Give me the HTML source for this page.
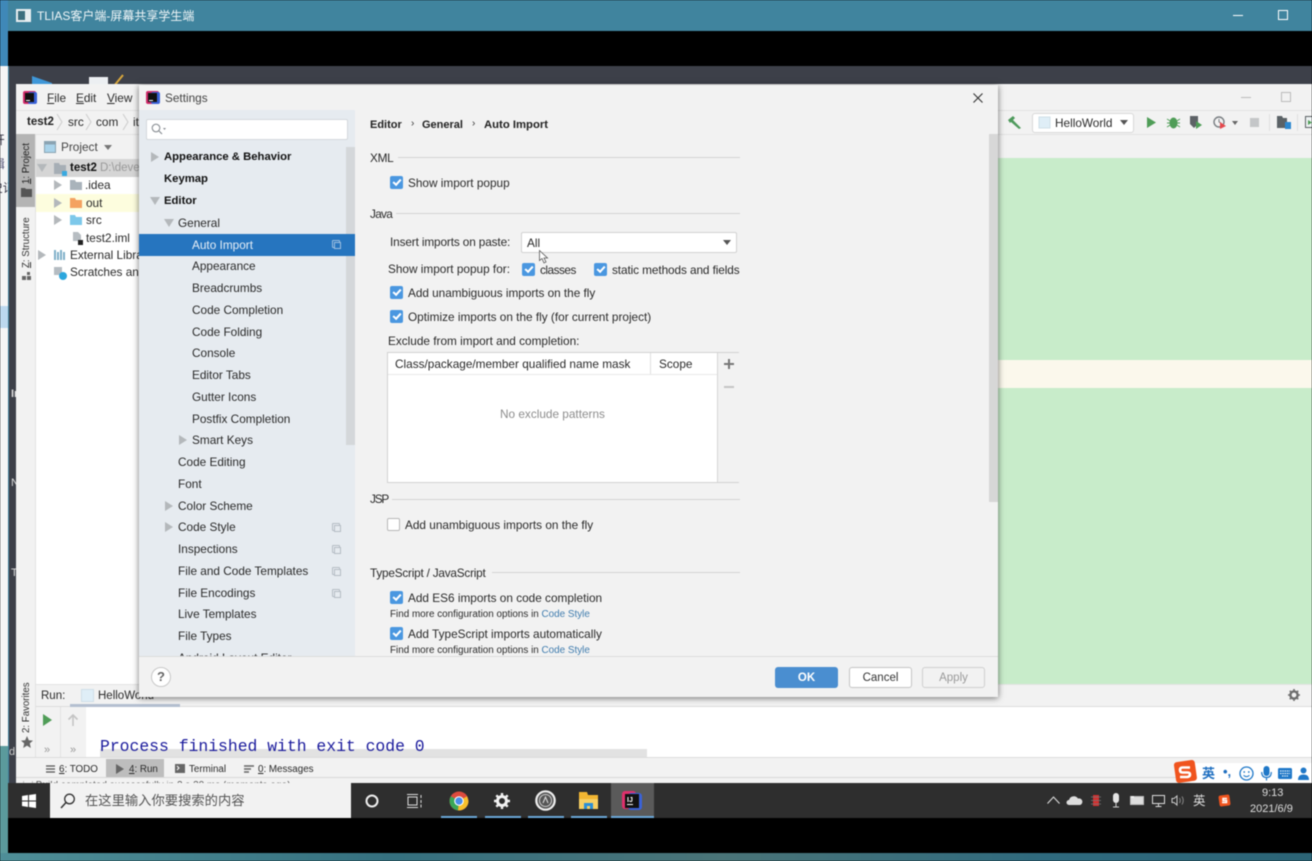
<!DOCTYPE html>
<html><head><meta charset="utf-8"><title>Settings</title>
<style>
html,body{margin:0;padding:0;background:#000}
#r{position:relative;width:1312px;height:861px;overflow:hidden;background:#000;font-family:"Liberation Sans","Noto Sans CJK SC",sans-serif;color:#2b2b2b;filter:blur(.4px)}
.b{position:absolute}
.t{position:absolute;white-space:nowrap;line-height:16px;font-size:11.8px;color:#2a2a2a}
.h{font-weight:bold;color:#111;font-size:11.3px}
.c{position:absolute;width:13px;height:13px;border-radius:2px;background:#4a97e0}
.c:after{content:"";position:absolute;left:3px;top:2.5px;width:6px;height:3px;border-left:2px solid #fff;border-bottom:2px solid #fff;transform:rotate(-48deg)}
.a{position:absolute;width:0;height:0;border-left:8px solid #b4b8bb;border-top:5px solid transparent;border-bottom:5px solid transparent}
.d{position:absolute;width:0;height:0;border-top:8px solid #b4b8bb;border-left:5px solid transparent;border-right:5px solid transparent}
.l{position:absolute;height:1px;background:#d4d4d4}
.k{position:absolute;width:6px;height:6px;border:1px solid #b5bcc4;border-radius:1px}
.k:after{content:"";position:absolute;left:1px;top:1px;width:5px;height:5px;border:1px solid #b5bcc4;background:#e6ebf0}
.s:after{background:#2675bf;border-color:#9dbfe0}
.v{position:absolute;white-space:nowrap;font-size:9.7px;line-height:12px;transform:rotate(-90deg);transform-origin:0 0;color:#333}
svg{position:absolute;overflow:visible}
u{text-decoration:underline}
</style></head><body><div id="r">
<!-- wallpaper / desk strip -->
<div class="b" style="left:0;top:0;width:8px;height:66px;background:#3f88b8"></div>
<div class="b" style="left:0;top:66px;width:8px;height:680px;background:#f5f5f5"></div>
<div class="b" style="left:0;top:306px;width:8px;height:22px;background:#bcd8ee"></div>
<div class="b" style="left:0;top:746px;width:8px;height:115px;background:#5b9a9c"></div>
<div class="b" style="left:0;top:130px;width:8px;height:70px;overflow:hidden"><div class="t" style="left:-7px;top:2px;color:#334">开</div><div class="t" style="left:-7px;top:26px;color:#557">辑</div><div class="t" style="left:-9px;top:50px;color:#334">史记</div></div>
<div class="b" style="left:0;top:853px;width:1312px;height:8px;background:linear-gradient(90deg,#4f8f98,#35707f 30%,#4a7478 55%,#2f6a7e 80%,#2c6476)"></div>
<!-- client window -->
<div class="b" style="left:8px;top:0;width:1304px;height:31px;background:#40849e"></div>
<svg style="left:16px;top:9px" width="15" height="13"><rect width="15" height="13" fill="#e8eef0"/><rect x="2" y="2" width="7" height="9" fill="#3d6f7e"/></svg>
<div class="t" style="left:37px;top:8px;color:#f0f6f8;font-size:12px">TLIAS客户端-屏幕共享学生端</div>
<div class="b" style="left:1233px;top:15px;width:10px;height:1px;background:#fff"></div>
<div class="b" style="left:1278px;top:10px;width:8px;height:8px;border:1px solid #fff"></div>
<div class="b" style="left:8px;top:66px;width:1304px;height:717px;background:#3d4049"></div>
<div class="b" style="left:8px;top:66px;width:1px;height:717px;background:#3f7f9a"></div>
<svg style="left:30px;top:74px" width="110" height="12"><path d="M2 12V2L22 9V12Z" fill="#3f97d8"/><path d="M59 12V3H78V12Z" fill="#eceff2"/><path d="M84 12L93 1" stroke="#d9a73c" stroke-width="2"/></svg>
<div class="t" style="left:11px;top:386px;color:#ddd;font-size:11px;width:5px;overflow:hidden;font-weight:bold">In</div>
<div class="t" style="left:11px;top:475px;color:#ddd;font-size:11px;width:5px;overflow:hidden">N</div>
<div class="t" style="left:11px;top:565px;color:#ddd;font-size:11px;width:5px;overflow:hidden">T</div>
<div class="t" style="left:9px;top:744px;color:#ccc;font-size:11px;width:7px;overflow:hidden">d</div>
<!-- IDE frame -->
<div class="b" style="left:16px;top:84px;width:1296px;height:699px;background:#f2f2f2"></div>
<div class="b" style="left:16px;top:134px;width:19px;height:623px;background:#f2f2f2;border-right:1px solid #e2e2e2"></div>
<svg style="left:22px;top:90px" width="15" height="15"><rect x="1" y="1" width="13" height="13" rx="2" fill="#d02a6a"/><rect x="6" y="2" width="9" height="12" rx="2" fill="#3a62d8"/><rect x="3" y="3" width="9" height="9" fill="#111"/><rect x="4" y="10" width="4" height="1" fill="#fff"/></svg>
<div class="t" style="left:47px;top:90px"><u>F</u>ile</div>
<div class="t" style="left:76px;top:90px"><u>E</u>dit</div>
<div class="t" style="left:107px;top:90px"><u>V</u>iew</div>
<div class="l" style="left:16px;top:110px;width:1296px;background:#e2e2e2"></div>
<div class="l" style="left:36px;top:134px;width:1276px;background:#e2e2e2"></div>
<div class="t" style="left:27px;top:114px;font-size:11.5px;font-weight:bold;color:#222">test2</div>
<svg style="left:56px;top:114px" width="8" height="16"><path d="M1 0L6 8L1 16" fill="none" stroke="#ccc"/></svg>
<div class="t" style="left:68px;top:114px">src</div>
<svg style="left:85px;top:114px" width="8" height="16"><path d="M1 0L6 8L1 16" fill="none" stroke="#ccc"/></svg>
<div class="t" style="left:96px;top:114px">com</div>
<svg style="left:122px;top:114px" width="8" height="16"><path d="M1 0L6 8L1 16" fill="none" stroke="#ccc"/></svg>
<div class="t" style="left:133px;top:114px">it</div>
<!-- left tool bar -->
<div class="b" style="left:16px;top:134px;width:19px;height:73px;background:#b4b4b4"></div>
<div class="v" style="left:21px;top:184px;color:#222"><u>1</u>: Project</div>
<svg style="left:21px;top:187px" width="11" height="10"><path d="M0 1H4L5 2H11V10H0Z" fill="#555"/></svg>
<div class="v" style="left:21px;top:268px"><u>Z</u>: Structure</div>
<svg style="left:22px;top:272px" width="10" height="9"><rect x="0" y="4" width="4" height="4" fill="#666"/><rect x="5" y="4" width="4" height="4" fill="#666"/><rect x="5" y="0" width="3" height="3" fill="#666"/></svg>
<div class="v" style="left:21px;top:733px">2: Favorites</div>
<svg style="left:21px;top:736px" width="12" height="12"><path d="M6 0L7.8 4.2L12 4.6L8.8 7.4L9.8 12L6 9.6L2.2 12L3.2 7.4L0 4.6L4.2 4.2Z" fill="#666"/></svg>
<!-- project panel -->
<div class="b" style="left:36px;top:135px;width:103px;height:549px;background:#fff"></div>
<div class="b" style="left:36px;top:135px;width:103px;height:24px;background:#f2f2f2"></div>
<div class="b" style="left:36px;top:159px;width:103px;height:18px;background:#d5d5d5"></div>
<div class="b" style="left:36px;top:194px;width:103px;height:18px;background:#fdfdde"></div>
<svg style="left:44px;top:141px" width="12" height="12"><rect x=".5" y=".5" width="11" height="11" fill="#a9d3ea" stroke="#8aa3b2"/><rect x=".5" y=".5" width="11" height="3" fill="#8aa3b2"/></svg>
<div class="t" style="left:61px;top:139px;color:#444">Project</div>
<div class="d" style="left:104px;top:145px;border-top:5px solid #777;border-left-width:4px;border-right-width:4px"></div>
<div class="d" style="left:37px;top:164px"></div>
<svg style="left:54px;top:163px" width="14" height="13"><path d="M0 0H5L6 2H12V11H0Z" fill="#a6aeb5"/><rect x="8" y="8" width="5" height="5" fill="#39a9e0"/></svg>
<div class="t" style="left:70px;top:160px;font-size:11.5px;font-weight:bold;color:#111">test2</div>
<div class="t" style="left:100px;top:160px;color:#999;font-size:11.5px">D:\deve</div>
<div class="a" style="left:54px;top:180px"></div>
<svg style="left:70px;top:180px" width="12" height="10"><path d="M0 0H5L6 2H12V10H0Z" fill="#a9b3bb"/></svg>
<div class="t" style="left:85px;top:177px">.idea</div>
<div class="a" style="left:54px;top:198px"></div>
<svg style="left:70px;top:198px" width="12" height="10"><path d="M0 0H5L6 2H12V10H0Z" fill="#f4a261"/></svg>
<div class="t" style="left:86px;top:195px">out</div>
<div class="a" style="left:54px;top:215px"></div>
<svg style="left:70px;top:215px" width="12" height="10"><path d="M0 0H5L6 2H12V10H0Z" fill="#7dc8ea"/></svg>
<div class="t" style="left:86px;top:212px">src</div>
<svg style="left:72px;top:232px" width="11" height="13"><path d="M1 0H6L9 3V9H1Z" fill="#b7bdc2"/><rect x="6" y="8" width="5" height="5" fill="#222"/></svg>
<div class="t" style="left:86px;top:230px">test2.iml</div>
<div class="a" style="left:38px;top:250px"></div>
<svg style="left:54px;top:249px" width="12" height="11"><path d="M1 1V11M4 3V11M7 1V11M10 3V11" stroke="#7fb0c8" stroke-width="2"/></svg>
<div class="t" style="left:70px;top:247px">External Libra</div>
<svg style="left:54px;top:267px" width="14" height="14"><rect x="0" y="0" width="8" height="8" fill="#b5bcc2"/><circle cx="9" cy="9" r="4" fill="#2ba6dd"/></svg>
<div class="t" style="left:70px;top:264px">Scratches and</div>
<!-- editor -->
<div class="b" style="left:998px;top:135px;width:314px;height:23px;background:#f2f2f2"></div>
<div class="b" style="left:998px;top:158px;width:314px;height:526px;background:#c8ecca"></div>
<div class="b" style="left:998px;top:360px;width:314px;height:28px;background:#fbf8ec"></div>
<!-- toolbar right -->
<div class="b" style="left:1241px;top:97px;width:10px;height:1px;background:#bbb"></div>
<div class="b" style="left:1281px;top:92px;width:8px;height:8px;border:1px solid #bbb"></div>
<svg style="left:1007px;top:116px" width="15" height="13"><path d="M1 4L6 0L8 2L6 4L14 12L12 13L4 6L3 7Z" fill="#4e9a5c"/></svg>
<div class="b" style="left:1032px;top:113px;width:100px;height:18px;background:#fff;border:1px solid #d8d8d8;border-radius:3px"></div>
<svg style="left:1038px;top:116px" width="13" height="13"><rect x="1" y="1" width="11" height="11" fill="#dfeef7" stroke="#cfdfe8"/></svg>
<div class="t" style="left:1055px;top:115px">HelloWorld</div>
<div class="d" style="left:1120px;top:120px;border-top:5px solid #555;border-left-width:4px;border-right-width:4px"></div>
<svg style="left:1146px;top:116px" width="12" height="13"><path d="M1 1L10 6.5L1 12Z" fill="#4f9d57"/></svg>
<svg style="left:1167px;top:115px" width="13" height="14"><ellipse cx="6.5" cy="8" rx="4" ry="5.5" fill="#4f9d57"/><path d="M0 4L13 12M13 4L0 12M0 8H13" stroke="#4f9d57"/></svg>
<svg style="left:1189px;top:115px" width="14" height="14"><path d="M1 1H9V9L5 13L1 9Z" fill="#5d6266"/><path d="M7 6L13 10L7 14Z" fill="#4f9d57"/></svg>
<svg style="left:1213px;top:115px" width="14" height="14"><circle cx="6" cy="7" r="5" fill="none" stroke="#7a7f83" stroke-width="1.4"/><path d="M6 4V7L8 8" stroke="#7a7f83" fill="none"/><path d="M7 7L13 11L7 14Z" fill="#e5484d"/></svg>
<div class="d" style="left:1232px;top:121px;border-top:4px solid #666;border-left-width:3.5px;border-right-width:3.5px"></div>
<div class="b" style="left:1250px;top:118px;width:9px;height:9px;background:#c4c6c8"></div>
<div class="b" style="left:1269px;top:114px;width:1px;height:17px;background:#e0e0e0"></div>
<svg style="left:1277px;top:116px" width="14" height="13"><path d="M0 0H5L6 2H10V12H0Z" fill="#5b6266"/><rect x="8" y="6" width="6" height="7" fill="#2d88d0"/></svg>
<div class="b" style="left:1297px;top:114px;width:1px;height:17px;background:#e0e0e0"></div>
<svg style="left:1305px;top:116px" width="10" height="13"><rect x=".5" y=".5" width="10" height="11" fill="#eef2f3" stroke="#5b6266"/><path d="M3 4L7 6.5L3 9Z" fill="#4f9d57"/></svg>
<!-- run area -->
<div class="b" style="left:36px;top:684px;width:1276px;height:23px;background:#f2f2f2;box-sizing:border-box;border-top:1px solid #e4e4e4;border-bottom:1px solid #dcdcdc"></div>
<div class="t" style="left:41px;top:688px;font-size:11.5px">Run:</div>
<svg style="left:81px;top:689px" width="13" height="13"><rect x=".5" y=".5" width="12" height="12" fill="#dfeef7" stroke="#cfdfe8"/></svg>
<div class="t" style="left:98px;top:688px;font-size:11.5px">HelloWorld</div>
<div class="b" style="left:70px;top:704px;width:110px;height:3px;background:#b4bfd0"></div>
<svg style="left:1288px;top:689px" width="12" height="12"><circle cx="6" cy="6" r="3.6" fill="none" stroke="#6d6d6d" stroke-width="2.4"/><path d="M6 0V2M6 10V12M0 6H2M10 6H12M1.8 1.8L3.2 3.2M8.8 8.8L10.2 10.2M1.8 10.2L3.2 8.8M8.8 3.2L10.2 1.8" stroke="#6d6d6d" stroke-width="1.6"/></svg>
<div class="b" style="left:36px;top:707px;width:50px;height:50px;background:#f2f2f2"></div>
<div class="b" style="left:60px;top:707px;width:1px;height:50px;background:#e2e2e2"></div>
<div class="b" style="left:86px;top:707px;width:1226px;height:50px;background:#fff"></div>
<svg style="left:43px;top:713px" width="10" height="14"><path d="M0 1L9 7L0 13Z" fill="#4f9d57"/></svg>
<svg style="left:67px;top:713px" width="12" height="14"><path d="M6 13V2M1.5 6.5L6 2L10.500 6.5" stroke="#c4c4c4" stroke-width="1.6" fill="none"/></svg>
<div class="t" style="left:44px;top:742px;color:#999;font-size:11px">»</div>
<div class="t" style="left:70px;top:742px;color:#999;font-size:11px">»</div>
<div class="b" style="left:100px;top:749px;width:547px;height:8px;background:#e2e2e2"></div>
<div class="b" style="left:100px;top:738px;font:16.4px/18px 'Liberation Mono',monospace;color:#1a1a9c;white-space:nowrap">Process finished with exit code 0</div>
<div class="l" style="left:16px;top:757px;width:1296px;background:#dcdcdc"></div>
<!-- bottom tabs -->
<div class="b" style="left:106px;top:759px;width:58px;height:18px;background:#bdbdbd"></div>
<svg style="left:46px;top:765px" width="9" height="8"><path d="M0 1H9M0 4H9M0 7H9" stroke="#555" stroke-width="1.3"/></svg>
<div class="t" style="left:59px;top:762px;font-size:9.800px"><u>6</u>: TODO</div>
<svg style="left:116px;top:764px" width="8" height="10"><path d="M0 0L8 5L0 10Z" fill="#666"/></svg>
<div class="t" style="left:129px;top:762px;font-size:9.800px"><u>4</u>: Run</div>
<svg style="left:175px;top:764px" width="10" height="9"><rect width="10" height="9" fill="#666"/><path d="M2 2L4 4L2 6" stroke="#fff" fill="none"/></svg>
<div class="t" style="left:189px;top:762px;font-size:9.800px">Terminal</div>
<svg style="left:244px;top:765px" width="10" height="8"><path d="M0 1H10M0 4H7M0 7H5" stroke="#666" stroke-width="1.4"/></svg>
<div class="t" style="left:258px;top:762px;font-size:9.800px"><u>0</u>: Messages</div>
<div class="l" style="left:16px;top:777px;width:1296px;background:#d8d8d8"></div>
<div class="b" style="left:23px;top:781px;width:320px;height:2px;overflow:hidden"><div class="t" style="left:0;top:0;font-size:10px;color:#555;line-height:10px">▢ Build completed successfully in 2 s 30 ms (moments ago)</div></div>
<!-- dialog -->
<div class="b" style="left:139px;top:85px;width:859px;height:612px;background:#f2f2f2;box-shadow:0 1px 6px rgba(0,0,0,.55)"></div>
<svg style="left:146px;top:91px" width="14" height="14"><rect x="0" y="0" width="13" height="13" rx="2" fill="#d02a6a"/><rect x="5" y="1" width="9" height="12" rx="2" fill="#3a62d8"/><rect x="2" y="2" width="9" height="9" fill="#111"/><rect x="3" y="9" width="4" height="1" fill="#fff"/></svg>
<div class="t" style="left:165px;top:90px;color:#444">Settings</div>
<svg style="left:973px;top:93px" width="10" height="10"><path d="M.5 .5L9.500 9.500M9.500 .5L.5 9.500" stroke="#333" stroke-width="1.1"/></svg>
<div class="b" style="left:139px;top:110px;width:216px;height:546px;background:#e6ebf0"></div>
<div class="b" style="left:146px;top:119px;width:200px;height:19px;background:#fff;border:1px solid #d4d8dc;border-radius:2px"></div>
<svg style="left:151px;top:123px" width="15" height="12"><circle cx="5" cy="5" r="3.8" fill="none" stroke="#8a8f94" stroke-width="1.1"/><path d="M8 8L11 11" stroke="#8a8f94" stroke-width="1.2"/><path d="M12 5H15L13.500 7Z" fill="#8a8f94"/></svg>
<div class="b" style="left:346px;top:147px;width:9px;height:298px;background:#d4d7da"></div>
<div class="b" style="left:139px;top:234px;width:216px;height:22px;background:#2675bf"></div>
<div class="a" style="left:151px;top:152px"></div>
<div class="t h" style="left:164px;top:149px">Appearance &amp; Behavior</div>
<div class="t h" style="left:164px;top:171px">Keymap</div>
<div class="d" style="left:150px;top:197px"></div>
<div class="t h" style="left:164px;top:193px">Editor</div>
<div class="d" style="left:164px;top:219px"></div>
<div class="t" style="left:178px;top:215px">General</div>
<div class="t" style="left:192px;top:237px;color:#e6eef6">Auto Import</div>
<div class="k s" style="left:332px;top:240px;border-color:#9dbfe0"></div>
<div class="t" style="left:192px;top:258px">Appearance</div>
<div class="t" style="left:192px;top:280px">Breadcrumbs</div>
<div class="t" style="left:192px;top:302px">Code Completion</div>
<div class="t" style="left:192px;top:324px">Code Folding</div>
<div class="t" style="left:192px;top:345px">Console</div>
<div class="t" style="left:192px;top:367px">Editor Tabs</div>
<div class="t" style="left:192px;top:389px">Gutter Icons</div>
<div class="t" style="left:192px;top:411px">Postfix Completion</div>
<div class="a" style="left:179px;top:435px"></div>
<div class="t" style="left:192px;top:432px">Smart Keys</div>
<div class="t" style="left:178px;top:454px">Code Editing</div>
<div class="t" style="left:178px;top:476px">Font</div>
<div class="a" style="left:165px;top:501px"></div>
<div class="t" style="left:178px;top:498px">Color Scheme</div>
<div class="a" style="left:165px;top:522px"></div>
<div class="t" style="left:178px;top:519px">Code Style</div>
<div class="k" style="left:332px;top:523px"></div>
<div class="t" style="left:178px;top:541px">Inspections</div>
<div class="k" style="left:332px;top:545px"></div>
<div class="t" style="left:178px;top:563px">File and Code Templates</div>
<div class="k" style="left:332px;top:567px"></div>
<div class="t" style="left:178px;top:585px">File Encodings</div>
<div class="k" style="left:332px;top:589px"></div>
<div class="t" style="left:178px;top:606px">Live Templates</div>
<div class="t" style="left:178px;top:628px">File Types</div>
<div class="b" style="left:178px;top:650px;width:120px;height:6px;overflow:hidden"><div class="t" style="left:0;top:0">Android Layout Editor</div></div>
<div class="b" style="left:139px;top:656px;width:859px;height:1px;background:#dcdcdc"></div>
<div class="b" style="left:151px;top:667px;width:18px;height:18px;border:1px solid #c8c8c8;border-radius:50%;background:#fff;font:bold 13px/18px 'Liberation Sans',sans-serif;text-align:center;color:#666">?</div>
<!-- settings main -->
<div class="t" style="left:370px;top:117px;font-size:11px;font-weight:bold;color:#222">Editor</div>
<div class="t" style="left:411px;top:116px;font-size:10px;color:#333">›</div>
<div class="t" style="left:422px;top:117px;font-size:11px;font-weight:bold;color:#222">General</div>
<div class="t" style="left:472px;top:116px;font-size:10px;color:#333">›</div>
<div class="t" style="left:484px;top:117px;font-size:11.300px;font-weight:bold;color:#222">Auto Import</div>
<div class="b" style="left:989px;top:134px;width:9px;height:368px;background:#d7d7d7"></div>
<div class="t" style="left:370px;top:150px;letter-spacing:-.3px">XML</div><div class="l" style="left:398px;top:157px;width:342px"></div>
<div class="c" style="left:390px;top:176px"></div>
<div class="t" style="left:408px;top:175px">Show import popup</div>
<div class="t" style="left:370px;top:206px;letter-spacing:-.7px">Java</div><div class="l" style="left:396px;top:213px;width:344px"></div>
<div class="t" style="left:390px;top:234px;letter-spacing:-.13px">Insert imports on paste:</div>
<div class="b" style="left:521px;top:232px;width:214px;height:19px;background:#fff;border:1px solid #d2d2d2;border-radius:2px"></div>
<div class="t" style="left:527px;top:235px">All</div>
<div class="d" style="left:723px;top:240px;border-top:5px solid #555;border-left-width:4px;border-right-width:4px"></div>
<svg style="left:539px;top:250px" width="10" height="14"><path d="M.5 .5V10.500L3 8.500L5 13L7 12L5 8H8.500Z" fill="#fff" stroke="#555" stroke-width=".8"/></svg>
<div class="t" style="left:388px;top:261px">Show import popup for:</div>
<div class="c" style="left:522px;top:263px"></div>
<div class="t" style="left:540px;top:262px;letter-spacing:-.5px">classes</div>
<div class="c" style="left:594px;top:263px"></div>
<div class="t" style="left:612px;top:262px;letter-spacing:-.09px">static methods and fields</div>
<div class="c" style="left:390px;top:286px"></div>
<div class="t" style="left:408px;top:285px;letter-spacing:-.03px">Add unambiguous imports on the fly</div>
<div class="c" style="left:390px;top:310px"></div>
<div class="t" style="left:408px;top:309px">Optimize imports on the fly (for current project)</div>
<div class="t" style="left:388px;top:333px">Exclude from import and completion:</div>
<div class="b" style="left:387px;top:352px;width:350px;height:129px;background:#fff;border:1px solid #d2d2d2"></div>
<div class="b" style="left:717px;top:353px;width:21px;height:129px;background:#f2f2f2;border-left:1px solid #d6d6d6"></div>
<div class="l" style="left:388px;top:374px;width:329px;background:#e8e8e8"></div>
<div class="b" style="left:650px;top:353px;width:1px;height:21px;background:#e0e0e0"></div>
<div class="t" style="left:395px;top:356px">Class/package/member qualified name mask</div>
<div class="t" style="left:659px;top:356px">Scope</div>
<div class="b" style="left:724px;top:363px;width:10px;height:2px;background:#777"></div>
<div class="b" style="left:728px;top:359px;width:2px;height:10px;background:#777"></div>
<div class="b" style="left:724px;top:386px;width:10px;height:2px;background:#c4c4c4"></div>
<div class="t" style="left:500px;top:406px;color:#8d8d8d">No exclude patterns</div>
<div class="t" style="left:370px;top:491px;letter-spacing:-1.200px">JSP</div><div class="l" style="left:392px;top:499px;width:348px"></div>
<div class="b" style="left:387px;top:518px;width:11px;height:11px;background:#fff;border:1px solid #b8b8b8;border-radius:2px"></div>
<div class="t" style="left:405px;top:517px">Add unambiguous imports on the fly</div>
<div class="t" style="left:370px;top:565px;letter-spacing:-.22px">TypeScript / JavaScript</div><div class="l" style="left:492px;top:572px;width:248px"></div>
<div class="c" style="left:390px;top:591px"></div>
<div class="t" style="left:408px;top:590px">Add ES6 imports on code completion</div>
<div class="t" style="left:390px;top:607px;font-size:9.900px">Find more configuration options in <span style="color:#3f7cae">Code Style</span></div>
<div class="c" style="left:390px;top:627px"></div>
<div class="t" style="left:408px;top:626px">Add TypeScript imports automatically</div>
<div class="t" style="left:390px;top:643px;font-size:9.900px">Find more configuration options in <span style="color:#3f7cae">Code Style</span></div>
<div class="b" style="left:775px;top:667px;width:63px;height:21px;background:#4a8ed0;border-radius:3px;color:#fff;font:bold 11.5px/22px 'Liberation Sans',sans-serif;text-align:center">OK</div>
<div class="b" style="left:849px;top:667px;width:61px;height:19px;background:#fff;border:1px solid #c4c4c4;border-radius:3px;font-size:11.5px;line-height:20px;text-align:center;color:#333">Cancel</div>
<div class="b" style="left:922px;top:667px;width:61px;height:19px;background:#f2f2f2;border:1px solid #cfcfcf;border-radius:3px;font-size:11.5px;line-height:20px;text-align:center;color:#9a9a9a">Apply</div>
<!-- taskbar -->
<div class="b" style="left:8px;top:783px;width:1304px;height:35px;background:#2e2e2e"></div>
<svg style="left:22px;top:794px" width="14" height="14"><path d="M0 2L6 1V6.500H0ZM7 1L14 0V6.500H7ZM0 7.500H6V13L0 12ZM7 7.500H14V14L7 13Z" fill="#fff"/></svg>
<div class="b" style="left:50px;top:783px;width:301px;height:35px;background:#f2f2f2"></div>
<svg style="left:60px;top:793px" width="16" height="16"><circle cx="9.500" cy="6" r="4.800" fill="none" stroke="#333" stroke-width="1.300"/><path d="M6 9.500L1 15" stroke="#333" stroke-width="1.500"/></svg>
<div class="t" style="left:85px;top:793px;font-size:13.300px;color:#555">在这里输入你要搜索的内容</div>
<svg style="left:365px;top:794px" width="14" height="14"><circle cx="7" cy="7" r="5.500" fill="none" stroke="#eee" stroke-width="2"/></svg>
<svg style="left:407px;top:794px" width="15" height="14"><rect x="1" y="3" width="9" height="8" fill="none" stroke="#ddd"/><path d="M0 .5H11M0 13.500H11M14 1V4M14 6V9M14 10.500V13.500" stroke="#ddd"/></svg>
<svg style="left:449px;top:791px" width="20" height="20" viewBox="0 0 20 20"><circle cx="10" cy="10" r="9.500" fill="#dd4b3e"/><path d="M10 10L1.800 5.200A9.500 9.500 0 0 0 9 19.400Z" fill="#3aa757"/><path d="M10 10L9 19.400A9.500 9.500 0 0 0 19.500 10L18 5.200Z" fill="#f6c02c"/><circle cx="10" cy="10" r="4.800" fill="#fff"/><circle cx="10" cy="10" r="3.700" fill="#4a8ee8"/></svg>
<svg style="left:494px;top:793px" width="16" height="16" viewBox="0 0 16 16"><circle cx="8" cy="8" r="4.500" fill="none" stroke="#f2f2f2" stroke-width="3"/><path d="M8 0V3M8 13V16M0 8H3M13 8H16M2.300 2.300L4.500 4.500M11.500 11.500L13.700 13.700M2.300 13.700L4.500 11.500M11.500 4.500L13.700 2.300" stroke="#f2f2f2" stroke-width="2.400"/></svg>
<svg style="left:535px;top:790px" width="21" height="21"><circle cx="10.500" cy="10.500" r="9.200" fill="#555" stroke="#eee" stroke-width="2.200"/><circle cx="10.500" cy="10.500" r="6" fill="none" stroke="#ccc"/><path d="M8 13L10.500 7L13 13" fill="none" stroke="#ddd"/></svg>
<svg style="left:579px;top:792px" width="19" height="17"><path d="M0 0H8L9 3H19V17H0Z" fill="#f2b632"/><rect x="0" y="7" width="19" height="10" fill="#f7cf63"/><rect x="5" y="11" width="9" height="6" fill="#2a8fd8"/><rect x="8" y="14" width="3" height="3" fill="#f7cf63"/></svg>
<div class="b" style="left:611px;top:783px;width:43px;height:35px;background:#5a5a5a"></div>
<svg style="left:622px;top:791px" width="21" height="20"><rect x="0" y="0" width="14" height="18" rx="3" fill="#e0306c"/><rect x="6" y="2" width="14" height="17" rx="3" fill="#3a62d8"/><rect x="3" y="3" width="14" height="14" fill="#111"/><text x="5" y="11" font-family="Liberation Sans" font-size="7" font-weight="bold" fill="#fff">IJ</text><rect x="5" y="13" width="6" height="1" fill="#fff"/></svg>
<div class="b" style="left:441px;top:816px;width:36px;height:2px;background:#6aa7d8"></div>
<div class="b" style="left:485px;top:816px;width:36px;height:2px;background:#6aa7d8"></div>
<div class="b" style="left:528px;top:816px;width:36px;height:2px;background:#6aa7d8"></div>
<div class="b" style="left:571px;top:816px;width:36px;height:2px;background:#6aa7d8"></div>
<div class="b" style="left:611px;top:816px;width:43px;height:2px;background:#6aa7d8"></div>
<!-- tray -->
<svg style="left:1047px;top:796px" width="13" height="8"><path d="M.5 7.500L6.500 1L12.500 7.500" fill="none" stroke="#ddd" stroke-width="1.100"/></svg>
<svg style="left:1067px;top:795px" width="15" height="10"><path d="M2 10A2.500 2.500 0 0 1 2 5A5 5 0 0 1 11 3.500A3.200 3.200 0 0 1 13 10Z" fill="#ddd"/></svg>
<svg style="left:1091px;top:794px" width="10" height="13"><rect x="2" y="1" width="6" height="11" fill="#d32f2f"/><path d="M0 3H10M0 6.500H10M0 10H10" stroke="#777" stroke-width=".8"/></svg>
<svg style="left:1111px;top:793px" width="10" height="15"><rect x="2" y="0" width="6" height="10" rx="3" fill="#e4e4e4"/><path d="M5 10V14M2 14H8" stroke="#ccc"/></svg>
<svg style="left:1130px;top:796px" width="15" height="9"><rect x=".5" y=".5" width="13" height="8" fill="#ddd" stroke="#bbb"/><rect x="1" y="0" width="3" height="2" fill="#eee"/></svg>
<svg style="left:1151px;top:795px" width="15" height="12"><path d="M1.500 .5H13.500V8.500H1.500ZM7.500 8.500V11.500M4.500 11.500H10.500" fill="none" stroke="#ddd"/></svg>
<svg style="left:1172px;top:795px" width="14" height="11"><path d="M0 3.500H2L5 1V10L2 7.500H0Z" fill="none" stroke="#ccc"/><path d="M7.500 3Q9 5.500 7.500 8M10 1.500Q12.500 5.500 10 9.500" fill="none" stroke="#888"/></svg>
<div class="t" style="left:1193px;top:793px;font-size:12.500px;color:#ddd">英</div>
<svg style="left:1218px;top:794px" width="13" height="13"><rect x="1" y="1" width="11" height="11" rx="2" fill="#f0541e" transform="rotate(-8 6.500 6.500)"/><path d="M9 4.500H5V6.500H8.500V8.500H4" fill="none" stroke="#fff" stroke-width="1.500"/></svg>
<div class="t" style="left:1262px;top:785px;font-size:11px;color:#ddd">9:13</div>
<div class="t" style="left:1250px;top:801px;font-size:11px;color:#ddd">2021/6/9</div>
<!-- sogou IME bar -->
<div class="b" style="left:1190px;top:763px;width:122px;height:20px;background:#fff"></div>
<svg style="left:1173px;top:760px" width="25" height="24"><rect x="2" y="1" width="21" height="21" rx="3" fill="#f0541e" transform="rotate(-8 12 12)"/><path d="M17 7.500H9.500Q7 7.500 7 10T9.500 12.500H14.500Q17 12.500 17 14.500T14.500 17H7" fill="none" stroke="#fff" stroke-width="2.600"/></svg>
<div class="t" style="left:1202px;top:766px;font-size:13px;font-weight:bold;color:#1f6fc0">英</div>
<div class="t" style="left:1223px;top:764px;font-size:13px;font-weight:bold;color:#1f6fc0">•,</div>
<svg style="left:1239px;top:766px" width="15" height="15"><circle cx="7.500" cy="7.500" r="6.500" fill="none" stroke="#1f78c8" stroke-width="1.300"/><circle cx="5.200" cy="6" r=".9" fill="#1f78c8"/><circle cx="9.800" cy="6" r=".9" fill="#1f78c8"/><path d="M4.500 9.200Q7.500 12 10.500 9.200" fill="none" stroke="#1f78c8"/></svg>
<svg style="left:1261px;top:766px" width="11" height="15"><rect x="2.500" y="0" width="6" height="10" rx="3" fill="#1f78c8"/><path d="M.7 6Q.7 11.500 5.500 11.500T10.300 6M5.500 11.500V14.500" fill="none" stroke="#1f78c8" stroke-width="1.200"/></svg>
<svg style="left:1278px;top:768px" width="14" height="11"><rect width="14" height="11" rx="1.500" fill="#1f78c8"/><path d="M2 3H12M2 5.500H12M4 8H10" stroke="#fff" stroke-dasharray="1.500 .8"/></svg>
<svg style="left:1298px;top:767px" width="14" height="14"><circle cx="5.500" cy="3.500" r="3" fill="#1f78c8"/><path d="M0 13Q0 7.500 5.500 7.500T11 13Z" fill="#1f78c8"/></svg>
</div></body></html>
